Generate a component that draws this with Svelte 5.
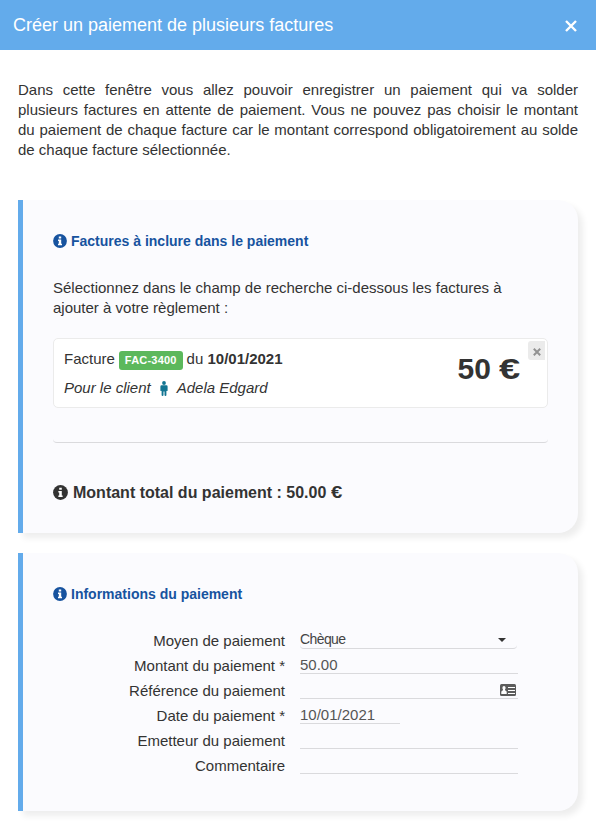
<script lang="ts">
  let invoices = $state([
    { ref: "FAC-3400", date: "10/01/2021", client: "Adela Edgard", amount: 50 },
  ]);

  let payment = $state({
    method: "Chèque",
    reference: "",
    date: "10/01/2021",
    issuer: "",
    comment: "",
  });

  let total = $derived(invoices.reduce((sum, i) => sum + i.amount, 0).toFixed(2));

  function removeInvoice(ref: string) {
    invoices = invoices.filter((i) => i.ref !== ref);
  }
</script>

{#snippet infoIcon()}
  <svg class="info" viewBox="0 0 14 14" aria-hidden="true">
    <circle cx="7" cy="7" r="6.9" fill="currentColor" />
    <path d="M5.8 2.5h2.4v2H5.8zM5 5.6h3.2v4.1H9v1.5H5V9.7h.8V7.1H5z" fill="#fff" />
  </svg>
{/snippet}

<div class="modal">
  <header class="modal__header">
    <h1>Créer un paiement de plusieurs factures</h1>
    <button type="button" class="modal__close" aria-label="Fermer">
      <svg viewBox="0 0 12 12" aria-hidden="true">
        <path d="M1 1l10 10M11 1L1 11" stroke="currentColor" stroke-width="2.4" />
      </svg>
    </button>
  </header>

  <main class="modal__body">
    <p class="intro">
      Dans cette fenêtre vous allez pouvoir enregistrer un paiement qui va solder plusieurs factures
      en attente de paiement. Vous ne pouvez pas choisir le montant du paiement de chaque facture
      car le montant correspond obligatoirement au solde de chaque facture sélectionnée.
    </p>

    <section class="card card--invoices">
      <h2>{@render infoIcon()}<span>Factures à inclure dans le paiement</span></h2>
      <p class="help">
        Sélectionnez dans le champ de recherche ci-dessous les factures à ajouter à votre règlement :
      </p>

      {#each invoices as invoice (invoice.ref)}
        <div class="invoice">
          <div class="invoice__text">
            <div class="invoice__line">
              <span>Facture</span>
              <span class="badge">{invoice.ref}</span>
              <span>du <b>{invoice.date}</b></span>
            </div>
            <div class="invoice__client">
              <span>Pour le client</span>
              <svg viewBox="0 0 8 15" aria-hidden="true">
                <circle cx="4" cy="2" r="1.9" />
                <path d="M1.6 4.3h4.8q1.2 0 1.2 1.2v4q0 .6-.6.6t-.6-.6V14q0 1-.9 1-1 0-1-1v-3.5h-1V14q0 1-1 1-.9 0-.9-1V9.5q0 .6-.6.6t-.6-.6v-4q0-1.2 1.2-1.2z" />
              </svg>
              <span>{invoice.client}</span>
            </div>
          </div>
          <strong class="invoice__amount">{invoice.amount} <span class="euro">€</span></strong>
          <button
            type="button"
            class="invoice__remove"
            aria-label="Retirer"
            onclick={() => removeInvoice(invoice.ref)}
          >
            <svg viewBox="0 0 8 8" aria-hidden="true">
              <path d="M.8.8l6.4 6.4M7.2.8L.8 7.2" stroke="currentColor" stroke-width="2" />
            </svg>
          </button>
        </div>
      {/each}

      <div class="search"></div>
      <div class="total">
        {@render infoIcon()}<span>Montant total du paiement : {total} <span class="euro">€</span></span>
      </div>
    </section>

    <section class="card card--payment">
      <h2>{@render infoIcon()}<span>Informations du paiement</span></h2>

      <form class="form">
        <label for="method">Moyen de paiement</label>
        <button type="button" id="method" class="field field--select">
          <span>{payment.method}</span>
          <i class="caret"></i>
        </button>

        <label for="amount">Montant du paiement *</label>
        <input id="amount" class="field" value={total} />

        <label for="reference">Référence du paiement</label>
        <div class="field field--icon">
          <input id="reference" bind:value={payment.reference} />
          <svg viewBox="0 0 16 12" aria-hidden="true">
            <rect width="16" height="12" rx="1.5" fill="#5c5c5c" />
            <path d="M4 2q1.6 0 1.6 1.8 0 1-.6 1.6v.8q1.7.5 1.7 1.8v2H1.3V8q0-1.3 1.7-1.8v-.8q-.6-.6-.6-1.6Q2.4 2 4 2z" fill="#fff" />
            <path d="M8 3.5h7M8 6.5h7M8 9.5h7" stroke="#fff" />
          </svg>
        </div>

        <label for="date">Date du paiement *</label>
        <input id="date" class="field field--date" bind:value={payment.date} />

        <label for="issuer">Emetteur du paiement</label>
        <input id="issuer" class="field" bind:value={payment.issuer} />

        <label for="comment">Commentaire</label>
        <input id="comment" class="field" bind:value={payment.comment} />
      </form>
    </section>
  </main>
</div>

<style>
  :global(body) {
    margin: 0;
    background: #fff;
  }

  .modal {
    min-height: 826px;
    font-family: "Liberation Sans", Arial, sans-serif;
    font-size: 15px;
    line-height: 20px;
    color: #333;
  }

  button,
  input {
    box-sizing: border-box;
    border: 0;
    padding: 0;
    background: none;
    font: inherit;
    color: inherit;
    letter-spacing: inherit;
    outline: none;
  }

  button {
    cursor: pointer;
  }

  .modal__header {
    display: flex;
    align-items: center;
    justify-content: space-between;
    height: 50px;
    padding: 0 19px 0 13px;
    background: #63abeb;
    color: #fff;
  }

  h1 {
    margin: 0;
    font-size: 18px;
    font-weight: 400;
  }

  .modal__close {
    display: flex;
    padding-top: 1px;
  }

  .modal__close svg {
    width: 12px;
    height: 12px;
  }

  .modal__body {
    padding: 30px 18px 15px;
  }

  .intro {
    margin: 0 0 40px;
    text-align: justify;
  }

  .card {
    box-sizing: border-box;
    margin-bottom: 20px;
    border-left: 5px solid #63abeb;
    border-radius: 0 20px 20px 0;
    padding: 30px;
    background: #fbfbfe;
    box-shadow: 5px 5px 6px rgba(0, 0, 0, 0.07);
  }

  .card--invoices {
    height: 333px;
  }

  .card--payment {
    height: 258px;
    margin-bottom: 0;
  }

  h2 {
    display: flex;
    align-items: center;
    gap: 4px;
    margin: 0;
    font-size: 14px;
    line-height: 22px;
    color: #17539f;
  }

  .info {
    width: 14px;
    height: 14px;
  }

  .help {
    margin: 26px 0 20px;
  }

  .euro {
    display: inline-block;
    transform: scaleX(1.27);
    transform-origin: left;
  }

  .invoice {
    position: relative;
    box-sizing: border-box;
    display: flex;
    justify-content: space-between;
    height: 70px;
    border: 1px solid #ebebeb;
    border-radius: 5px;
    padding: 10px 31px 0 10px;
    background: #fff;
  }

  .invoice__line {
    display: flex;
    gap: 4px;
  }

  .badge {
    box-sizing: border-box;
    height: 19px;
    margin-top: 2px;
    border-radius: 3px;
    padding: 0 6px;
    background: #5cb85c;
    font-size: 11px;
    font-weight: 700;
    letter-spacing: 0.2px;
    line-height: 19px;
    color: #fff;
  }

  .invoice__client {
    display: flex;
    align-items: center;
    margin-top: 8px;
    font-style: italic;
  }

  .invoice__client svg {
    width: 8px;
    height: 15px;
    margin: 0 9px;
    fill: #127592;
  }

  .invoice__amount {
    font-size: 30px;
    line-height: 40px;
  }

  .invoice__remove {
    position: absolute;
    top: 2px;
    right: 2px;
    display: flex;
    align-items: center;
    justify-content: center;
    width: 17px;
    height: 19px;
    border-radius: 3px 0 0 3px;
    background: #ebebeb;
    color: #929292;
  }

  .invoice__remove svg {
    width: 8px;
    height: 8px;
    margin-top: 2px;
  }

  .search {
    height: 34px;
    border-bottom: 1px solid #dadadd;
    border-radius: 4px;
  }

  .total {
    display: flex;
    align-items: center;
    gap: 5px;
    margin-top: 39px;
    font-size: 16px;
    font-weight: 700;
  }

  .total > span {
    padding-top: 1px;
  }

  .total .info,
  .total :global(.info) {
    width: 15px;
    height: 15px;
  }

  .form {
    display: grid;
    grid-template-columns: 232px 218px;
    grid-auto-rows: 25px;
    column-gap: 15px;
    margin-top: 19px;
  }

  label {
    padding-top: 7px;
    text-align: right;
    white-space: nowrap;
  }

  .field {
    width: 218px;
    height: 25px;
    border-bottom: 1px solid #dadadd;
    padding-top: 6px;
    color: #555;
  }

  .field--select {
    display: flex;
    align-items: center;
    justify-content: space-between;
    width: 217px;
    padding: 5px 11px 0 0;
    border-radius: 4px;
    font-size: 14px;
    letter-spacing: -0.6px;
    color: #444;
  }

  .caret {
    margin-top: 2px;
    border: 4px solid transparent;
    border-top-color: #333;
    border-bottom: 0;
  }

  .field--icon {
    box-sizing: border-box;
    display: flex;
    align-items: center;
    padding-top: 8px;
    padding-right: 2px;
  }

  .field--icon input {
    flex: 1;
    min-width: 0;
    height: 16px;
  }

  .field--icon svg {
    width: 16px;
    height: 12px;
  }

  .field--date {
    width: 100px;
  }
</style>
